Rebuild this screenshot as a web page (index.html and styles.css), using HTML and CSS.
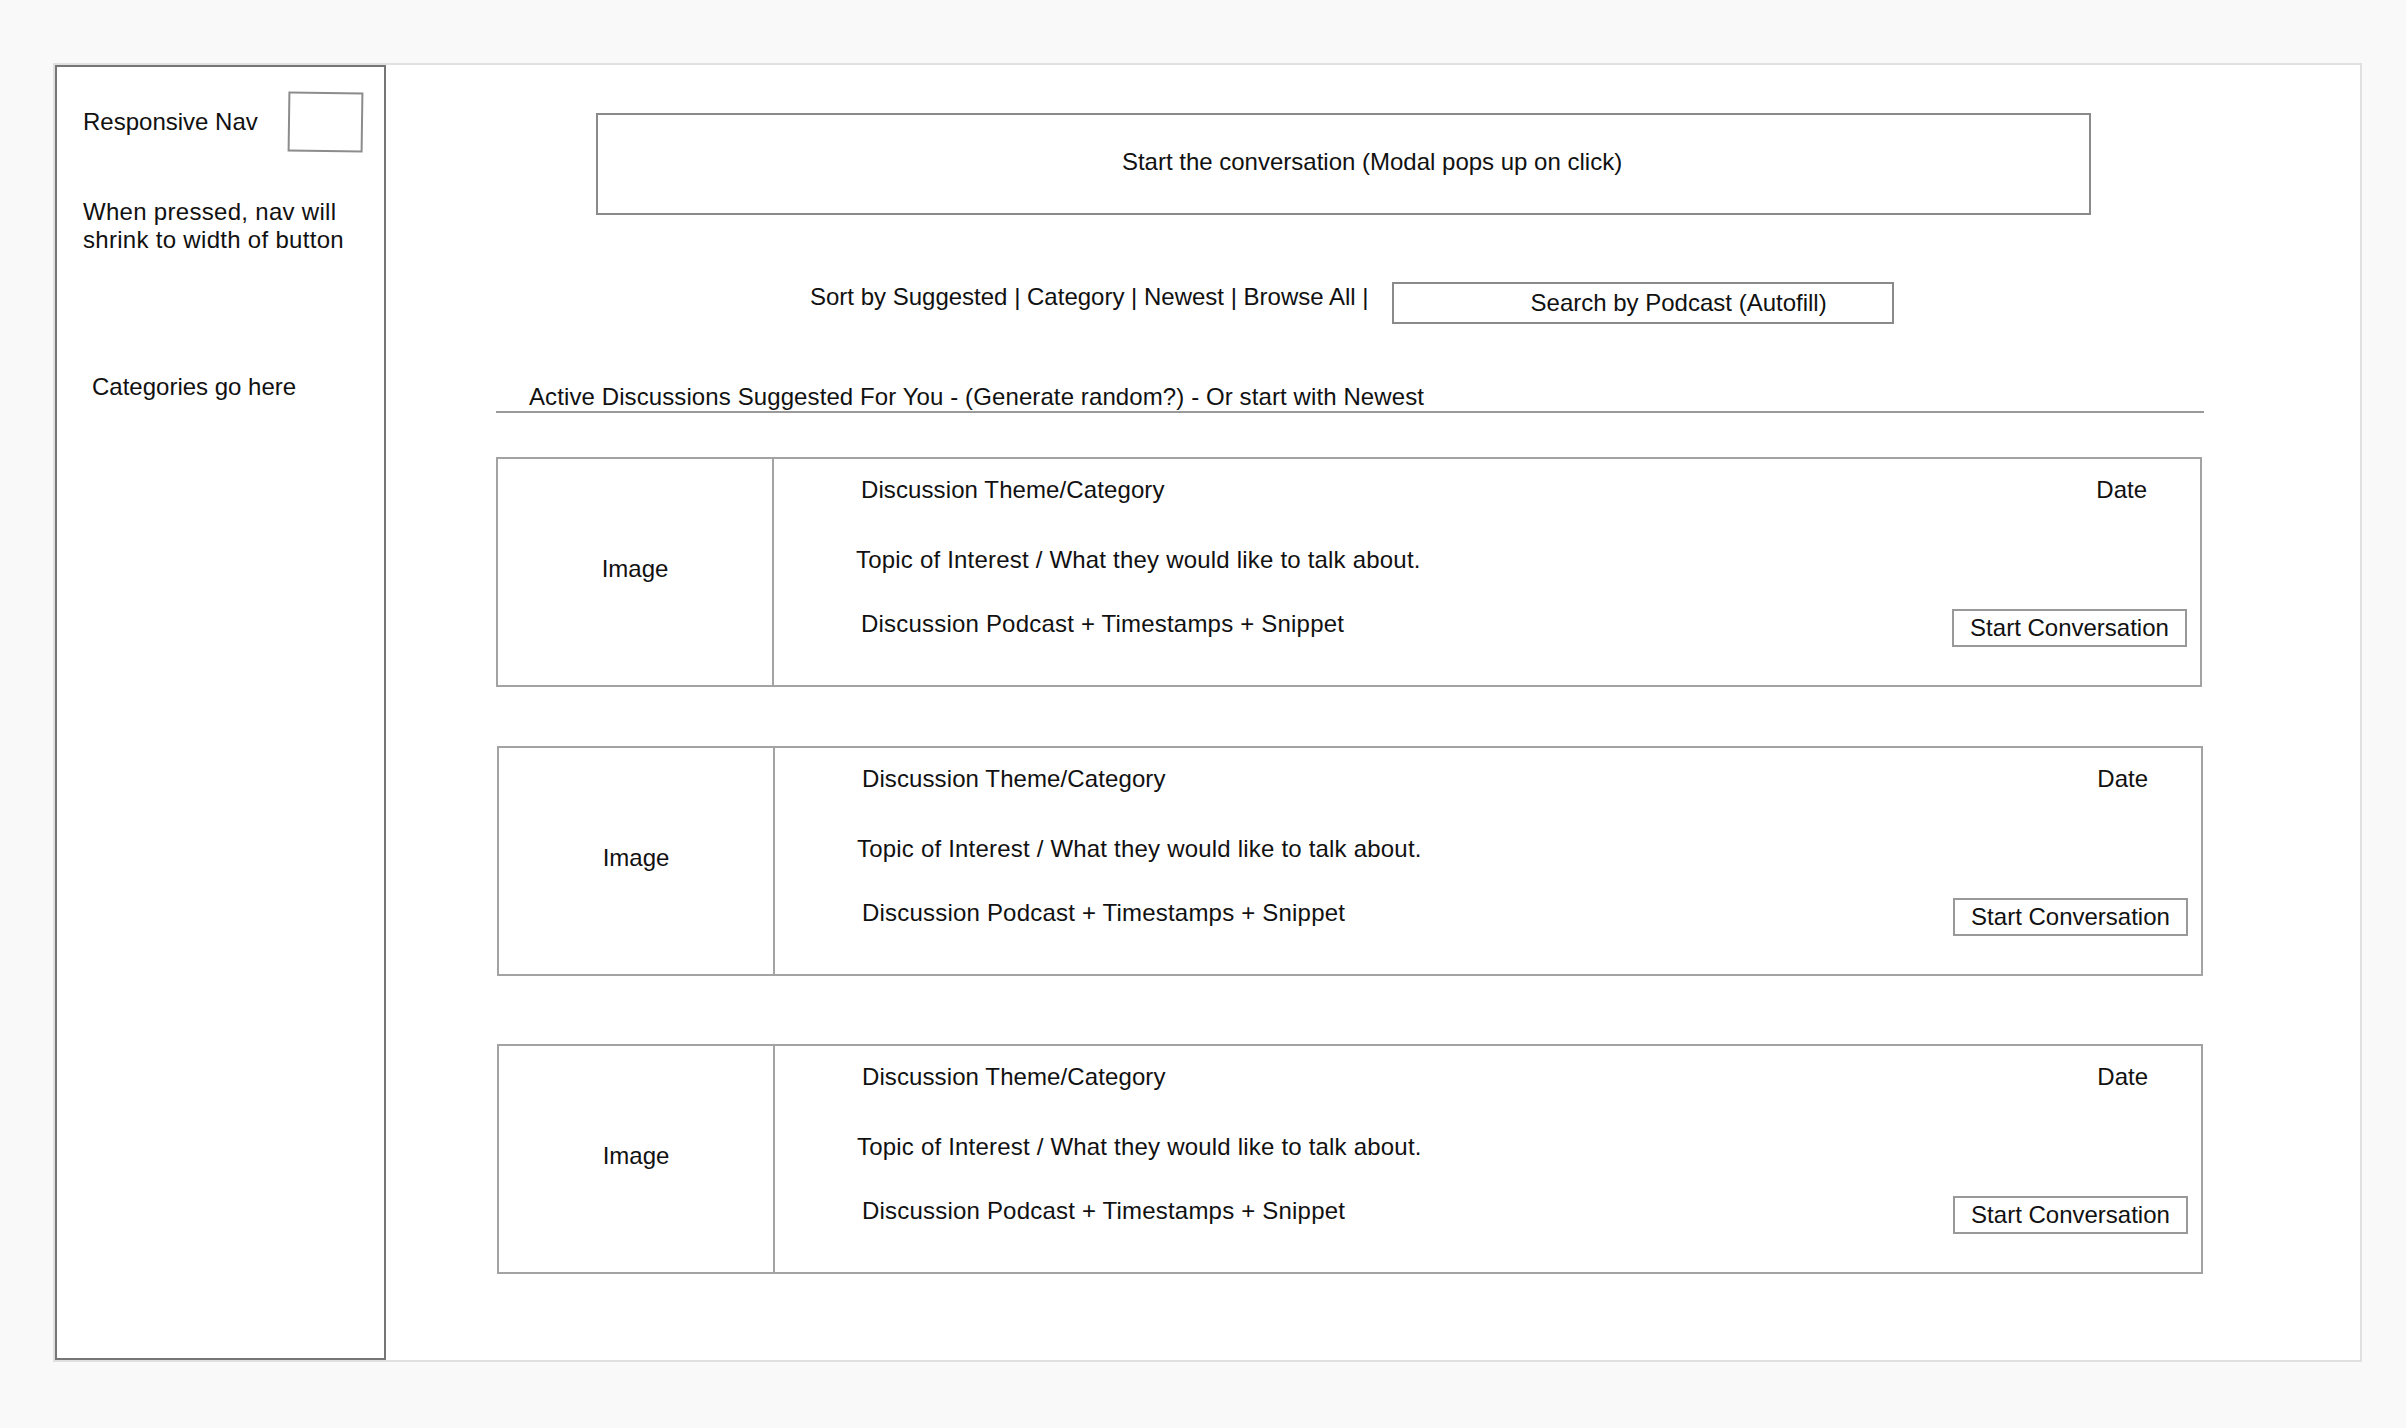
FILE: index.html
```html
<!DOCTYPE html>
<html>
<head>
<meta charset="utf-8">
<title>Discussions Wireframe</title>
<link rel="stylesheet" href="styles.css">
</head>
<body>
<div class="frame">
  <aside class="sidebar">
    <div class="nav-head">
      <span class="nav-title">Responsive Nav</span>
      <span class="nav-toggle"></span>
    </div>
    <p class="nav-note">When pressed, nav will<br>shrink to width of button</p>
    <p class="nav-cats">Categories go here</p>
  </aside>
  <main class="main">
    <div class="content">
      <div class="start-box"><span>Start the conversation (Modal pops up on click)</span></div>
      <div class="sort-row">
        <span class="sort-text">Sort by Suggested | Category | Newest | Browse All |</span>
        <div class="search-box">Search by Podcast (Autofill)</div>
      </div>
      <div class="section-head">Active Discussions Suggested For You - (Generate random?) - Or start with Newest</div>
      <div class="cards">
        <div class="card">
          <div class="card-image">Image</div>
          <div class="card-body">
            <div class="row-top"><span class="theme">Discussion Theme/Category</span><span class="date">Date</span></div>
            <div class="topic">Topic of Interest / What they would like to talk about.</div>
            <div class="row-bottom"><span class="podcast">Discussion Podcast + Timestamps + Snippet</span><span class="btn">Start Conversation</span></div>
          </div>
        </div>
        <div class="card">
          <div class="card-image">Image</div>
          <div class="card-body">
            <div class="row-top"><span class="theme">Discussion Theme/Category</span><span class="date">Date</span></div>
            <div class="topic">Topic of Interest / What they would like to talk about.</div>
            <div class="row-bottom"><span class="podcast">Discussion Podcast + Timestamps + Snippet</span><span class="btn">Start Conversation</span></div>
          </div>
        </div>
        <div class="card">
          <div class="card-image">Image</div>
          <div class="card-body">
            <div class="row-top"><span class="theme">Discussion Theme/Category</span><span class="date">Date</span></div>
            <div class="topic">Topic of Interest / What they would like to talk about.</div>
            <div class="row-bottom"><span class="podcast">Discussion Podcast + Timestamps + Snippet</span><span class="btn">Start Conversation</span></div>
          </div>
        </div>
      </div>
    </div>
  </main>
</div>
</body>
</html>
```
FILE: styles.css
```css
* { box-sizing: border-box; }

html, body {
  margin: 0;
  padding: 0;
  background: #f9f9f9;
}

body {
  font-family: "Liberation Sans", Arial, Helvetica, sans-serif;
  font-size: 24px;
  line-height: 28px;
  color: #111;
  padding: 63px 0 0 53px;
}

.frame {
  width: 2309px;
  height: 1299px;
  background: #fff;
  border: 2px solid #e0e0e0;
  display: flex;
}

.sidebar {
  width: 331px;
  flex: none;
  border: 2px solid #767676;
  padding: 25px 21px 0 26px;
}

.nav-head {
  display: flex;
  align-items: center;
  justify-content: space-between;
}

.nav-toggle {
  width: 75px;
  height: 60px;
  border: 2px solid #8c8c8c;
  transform: rotate(0.8deg);
}

.nav-note {
  margin: 46px 0 0;
  letter-spacing: 0.3px;
}

.nav-cats {
  margin: 119px 0 0 9px;
}

.main {
  flex: 1;
  padding: 48px 0 0 110px;
}

.content {
  width: 1708px;
}

.start-box {
  margin-left: 100px;
  width: 1495px;
  height: 102px;
  border: 2px solid #8a8a8a;
  display: flex;
  align-items: center;
  justify-content: center;
  padding: 0 0 4px 57px;
}

.sort-row {
  margin-top: 67px;
  padding-left: 314px;
  display: flex;
  align-items: flex-start;
  gap: 23px;
}

.sort-text {
  white-space: nowrap;
  padding-top: 1px;
}

.search-box {
  width: 502px;
  height: 42px;
  border: 2px solid #8a8a8a;
  display: flex;
  align-items: center;
  padding-left: 137px;
}

.section-head {
  margin-top: 58px;
  padding-left: 33px;
  padding-top: 1px;
  border-bottom: 2px solid #9a9a9a;
  letter-spacing: 0.1px;
}

.cards {
  margin-top: 44px;
  display: flex;
  flex-direction: column;
}

.card {
  width: 1706px;
  height: 230px;
  border: 2px solid #a3a3a3;
  display: flex;
}

.card:nth-child(2) { margin-top: 59px; margin-left: 1px; }
.card:nth-child(3) { margin-top: 68px; margin-left: 1px; }

.card-image {
  width: 276px;
  flex: none;
  border-right: 2px solid #a3a3a3;
  display: flex;
  align-items: center;
  justify-content: center;
  padding-bottom: 6px;
}

.card-body {
  flex: 1;
  padding-top: 17px;
}

.row-top {
  display: flex;
  justify-content: space-between;
  padding-left: 87px;
  padding-right: 53px;
}

.theme {
  letter-spacing: 0.1px;
}

.topic {
  margin-top: 42px;
  padding-left: 82px;
  letter-spacing: 0.2px;
}

.row-bottom {
  margin-top: 36px;
  display: flex;
  justify-content: space-between;
  align-items: flex-start;
  padding-left: 87px;
  padding-right: 13px;
}

.podcast {
  letter-spacing: 0.2px;
}

.btn {
  width: 235px;
  height: 38px;
  margin-top: -1px;
  border: 2px solid #999;
  display: flex;
  align-items: center;
  justify-content: center;
}
```
